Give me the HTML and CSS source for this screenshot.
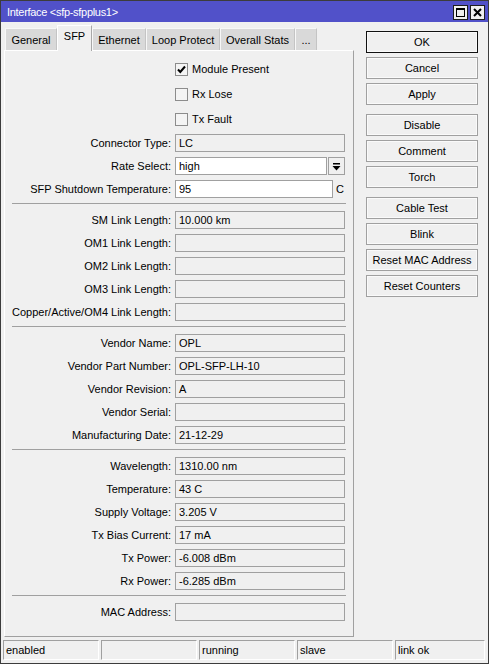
FILE: index.html
```html
<!DOCTYPE html>
<html lang="en">
<head>
    <meta charset="UTF-8">
    <title>Interface &lt;sfp-sfpplus1&gt;</title>
    <link rel="stylesheet" href="styles.css">
</head>
<body>
    <div class="window">
        <div class="titlebar">
            <span class="title">Interface &lt;sfp-sfpplus1&gt;</span>
            <div class="title-buttons">
                <span class="title-btn">
                    <svg width="13" height="13" viewBox="0 0 13 13"><rect x="2.5" y="2.5" width="8" height="8" fill="none" stroke="#000" stroke-width="1"/><rect x="2" y="2" width="9" height="2" fill="#000"/></svg>
                </span>
                <span class="title-btn">
                    <svg width="13" height="13" viewBox="0 0 13 13"><path d="M3 3 L10 10 M10 3 L3 10" stroke="#000" stroke-width="2"/></svg>
                </span>
            </div>
        </div>

        <div class="content">
            <div class="main">
                <div class="tabs">
                    <div class="tab tab-general">General</div>
                    <div class="tab tab-sfp active">SFP</div>
                    <div class="tab tab-ethernet">Ethernet</div>
                    <div class="tab tab-loop">Loop Protect</div>
                    <div class="tab tab-stats">Overall Stats</div>
                    <div class="tab tab-more">...</div>
                </div>

                <div class="panel">
                    <div class="checks">
                        <div class="row check-row">
                            <span></span>
                            <div class="check-item">
                                <span class="checkbox"><svg width="11" height="11" viewBox="0 0 11 11"><path d="M2 5.5 L4.3 8 L9 2.5" fill="none" stroke="#000" stroke-width="2"/></svg></span>
                                Module Present
                            </div>
                        </div>
                        <div class="row check-row">
                            <span></span>
                            <div class="check-item"><span class="checkbox"></span>Rx Lose</div>
                        </div>
                        <div class="row check-row">
                            <span></span>
                            <div class="check-item"><span class="checkbox"></span>Tx Fault</div>
                        </div>
                    </div>

                    <div class="section">
                        <div class="row"><span class="label">Connector Type:</span><div class="field">LC</div></div>
                        <div class="row">
                            <span class="label">Rate Select:</span>
                            <div class="combo">
                                <div class="field editable rate">high</div>
                                <span class="dd-btn"><svg width="11" height="11" viewBox="0 0 11 11"><rect x="2" y="2" width="7" height="1.5" fill="#000"/><path d="M1.5 5 H9.5 L5.5 9.5 Z" fill="#000"/></svg></span>
                            </div>
                        </div>
                        <div class="row">
                            <span class="label">SFP Shutdown Temperature:</span>
                            <div class="combo">
                                <div class="field editable temp">95</div>
                                <span class="unit">C</span>
                            </div>
                        </div>
                    </div>
                    <div class="sep"></div>

                    <div class="section">
                        <div class="row"><span class="label">SM Link Length:</span><div class="field">10.000 km</div></div>
                        <div class="row"><span class="label">OM1 Link Length:</span><div class="field"></div></div>
                        <div class="row"><span class="label">OM2 Link Length:</span><div class="field"></div></div>
                        <div class="row"><span class="label">OM3 Link Length:</span><div class="field"></div></div>
                        <div class="row"><span class="label">Copper/Active/OM4 Link Length:</span><div class="field"></div></div>
                    </div>
                    <div class="sep"></div>

                    <div class="section">
                        <div class="row"><span class="label">Vendor Name:</span><div class="field">OPL</div></div>
                        <div class="row"><span class="label">Vendor Part Number:</span><div class="field">OPL-SFP-LH-10</div></div>
                        <div class="row"><span class="label">Vendor Revision:</span><div class="field">A</div></div>
                        <div class="row"><span class="label">Vendor Serial:</span><div class="field"></div></div>
                        <div class="row"><span class="label">Manufacturing Date:</span><div class="field">21-12-29</div></div>
                    </div>
                    <div class="sep"></div>

                    <div class="section">
                        <div class="row"><span class="label">Wavelength:</span><div class="field">1310.00 nm</div></div>
                        <div class="row"><span class="label">Temperature:</span><div class="field">43 C</div></div>
                        <div class="row"><span class="label">Supply Voltage:</span><div class="field">3.205 V</div></div>
                        <div class="row"><span class="label">Tx Bias Current:</span><div class="field">17 mA</div></div>
                        <div class="row"><span class="label">Tx Power:</span><div class="field">-6.008 dBm</div></div>
                        <div class="row"><span class="label">Rx Power:</span><div class="field">-6.285 dBm</div></div>
                    </div>
                    <div class="sep"></div>

                    <div class="section">
                        <div class="row"><span class="label">MAC Address:</span><div class="field"></div></div>
                    </div>
                </div>
            </div>

            <div class="side">
                <div class="btn-group">
                    <div class="btn default">OK</div>
                    <div class="btn">Cancel</div>
                    <div class="btn">Apply</div>
                </div>
                <div class="btn-group">
                    <div class="btn">Disable</div>
                    <div class="btn">Comment</div>
                    <div class="btn">Torch</div>
                </div>
                <div class="btn-group">
                    <div class="btn">Cable Test</div>
                    <div class="btn">Blink</div>
                    <div class="btn">Reset MAC Address</div>
                    <div class="btn">Reset Counters</div>
                </div>
            </div>
        </div>

        <div class="statusbar">
            <div class="status-cell">enabled</div>
            <div class="status-cell"></div>
            <div class="status-cell">running</div>
            <div class="status-cell">slave</div>
            <div class="status-cell last">link ok</div>
        </div>
    </div>
</body>
</html>
```

FILE: styles.css
```css
* {
    margin: 0;
    padding: 0;
    box-sizing: border-box;
}
body {
    font-family: "Liberation Sans", Arial, sans-serif;
    font-size: 11px;
    color: #000;
    background: #f0f0f0;
}
.window {
    display: flex;
    flex-direction: column;
    width: 489px;
    height: 664px;
    background: #f0f0f0;
    border: 1px solid #3c3c3c;
}

/* title bar */
.titlebar {
    display: flex;
    justify-content: space-between;
    align-items: flex-start;
    height: 21px;
    background: #5151c9;
    color: #fff;
    padding: 4px 3px 0 6px;
}
.title {
    font-size: 11px;
    letter-spacing: -0.3px;
    line-height: 15px;
}
.title-buttons {
    display: flex;
    gap: 2px;
}
.title-btn {
    display: flex;
    align-items: center;
    justify-content: center;
    width: 15px;
    height: 15px;
    background: #f0f0f0;
    border: 1px solid #1e1e1e;
}

/* body */
.content {
    display: flex;
    flex: 1;
    padding: 3px 0 0 3px;
}
.main {
    display: flex;
    flex-direction: column;
    width: 350px;
}
.tabs {
    display: flex;
    align-items: flex-end;
    height: 25px;
    padding-left: 1px;
}
.tab {
    height: 22px;
    line-height: 22px;
    text-align: center;
    background: #d9d9d9;
    border-left: 1px solid #f7f7f7;
    border-top: 1px solid #f7f7f7;
    border-right: 1px solid #c4c4c4;
}
.tab.active {
    height: 26px;
    line-height: 21px;
    background: #f0f0f0;
    border-left: 1px solid #fff;
    border-top: 1px solid #fff;
    border-right: 1px solid #a8a8a8;
    margin-bottom: -1px;
    position: relative;
    z-index: 1;
}
.tab-general { width: 52px; }
.tab-sfp { width: 35px; }
.tab-ethernet { width: 54px; }
.tab-loop { width: 74px; }
.tab-stats { width: 75px; }
.tab-more { width: 22px; }

.panel {
    height: 587px;
    border: 1px solid #a0a0a0;
    border-top-color: #fff;
    border-left-color: #fff;
    padding-top: 12px;
}

/* form rows */
.checks {
    display: flex;
    flex-direction: column;
    gap: 12px;
    margin-bottom: 8px;
}
.row {
    display: grid;
    grid-template-columns: 166px 170px;
    column-gap: 4px;
    align-items: center;
    height: 18px;
}
.check-row {
    height: 13px;
}
.check-item {
    display: flex;
    align-items: center;
    gap: 4px;
    line-height: 13px;
}
.checkbox {
    display: flex;
    align-items: center;
    justify-content: center;
    width: 13px;
    height: 13px;
    background: #f4f4f4;
    border: 1px solid #8c8c8c;
}
.label {
    text-align: right;
    white-space: nowrap;
}
.section {
    display: flex;
    flex-direction: column;
    gap: 5px;
}
.field {
    height: 18px;
    line-height: 16px;
    padding-left: 3px;
    border: 1px solid #a0a0a0;
    background: #f0f0f0;
    white-space: nowrap;
}
.field.editable {
    background: #fff;
}
.combo {
    display: flex;
    align-items: center;
}
.rate {
    width: 152px;
}
.dd-btn {
    display: flex;
    align-items: center;
    justify-content: center;
    width: 17px;
    height: 18px;
    margin-left: 1px;
    border: 1px solid #a0a0a0;
    background: #f0f0f0;
}
.temp {
    width: 158px;
}
.unit {
    margin-left: 3px;
}
.sep {
    height: 1px;
    background: #a0a0a0;
    margin: 5px 7px 7px 7px;
}

/* side buttons */
.side {
    display: flex;
    flex-direction: column;
    gap: 9px;
    width: 112px;
    margin-left: 12px;
    padding-top: 6px;
}
.btn-group {
    display: flex;
    flex-direction: column;
    gap: 4px;
}
.btn {
    height: 22px;
    line-height: 20px;
    text-align: center;
    background: #f0f0f0;
    border: 1px solid #a0a0a0;
    box-shadow: inset 0 0 0 1px #fafafa;
    white-space: nowrap;
}
.btn.default {
    border: 1px solid #111;
}

/* status bar */
.statusbar {
    display: flex;
    gap: 2px;
    height: 23px;
    padding: 0 3px 3px 2px;
}
.status-cell {
    width: 96px;
    height: 20px;
    line-height: 18px;
    padding-left: 2px;
    border: 1px solid #a0a0a0;
    border-right-color: #fff;
    border-bottom-color: #fff;
}
.status-cell.last {
    flex: 1;
}
```
